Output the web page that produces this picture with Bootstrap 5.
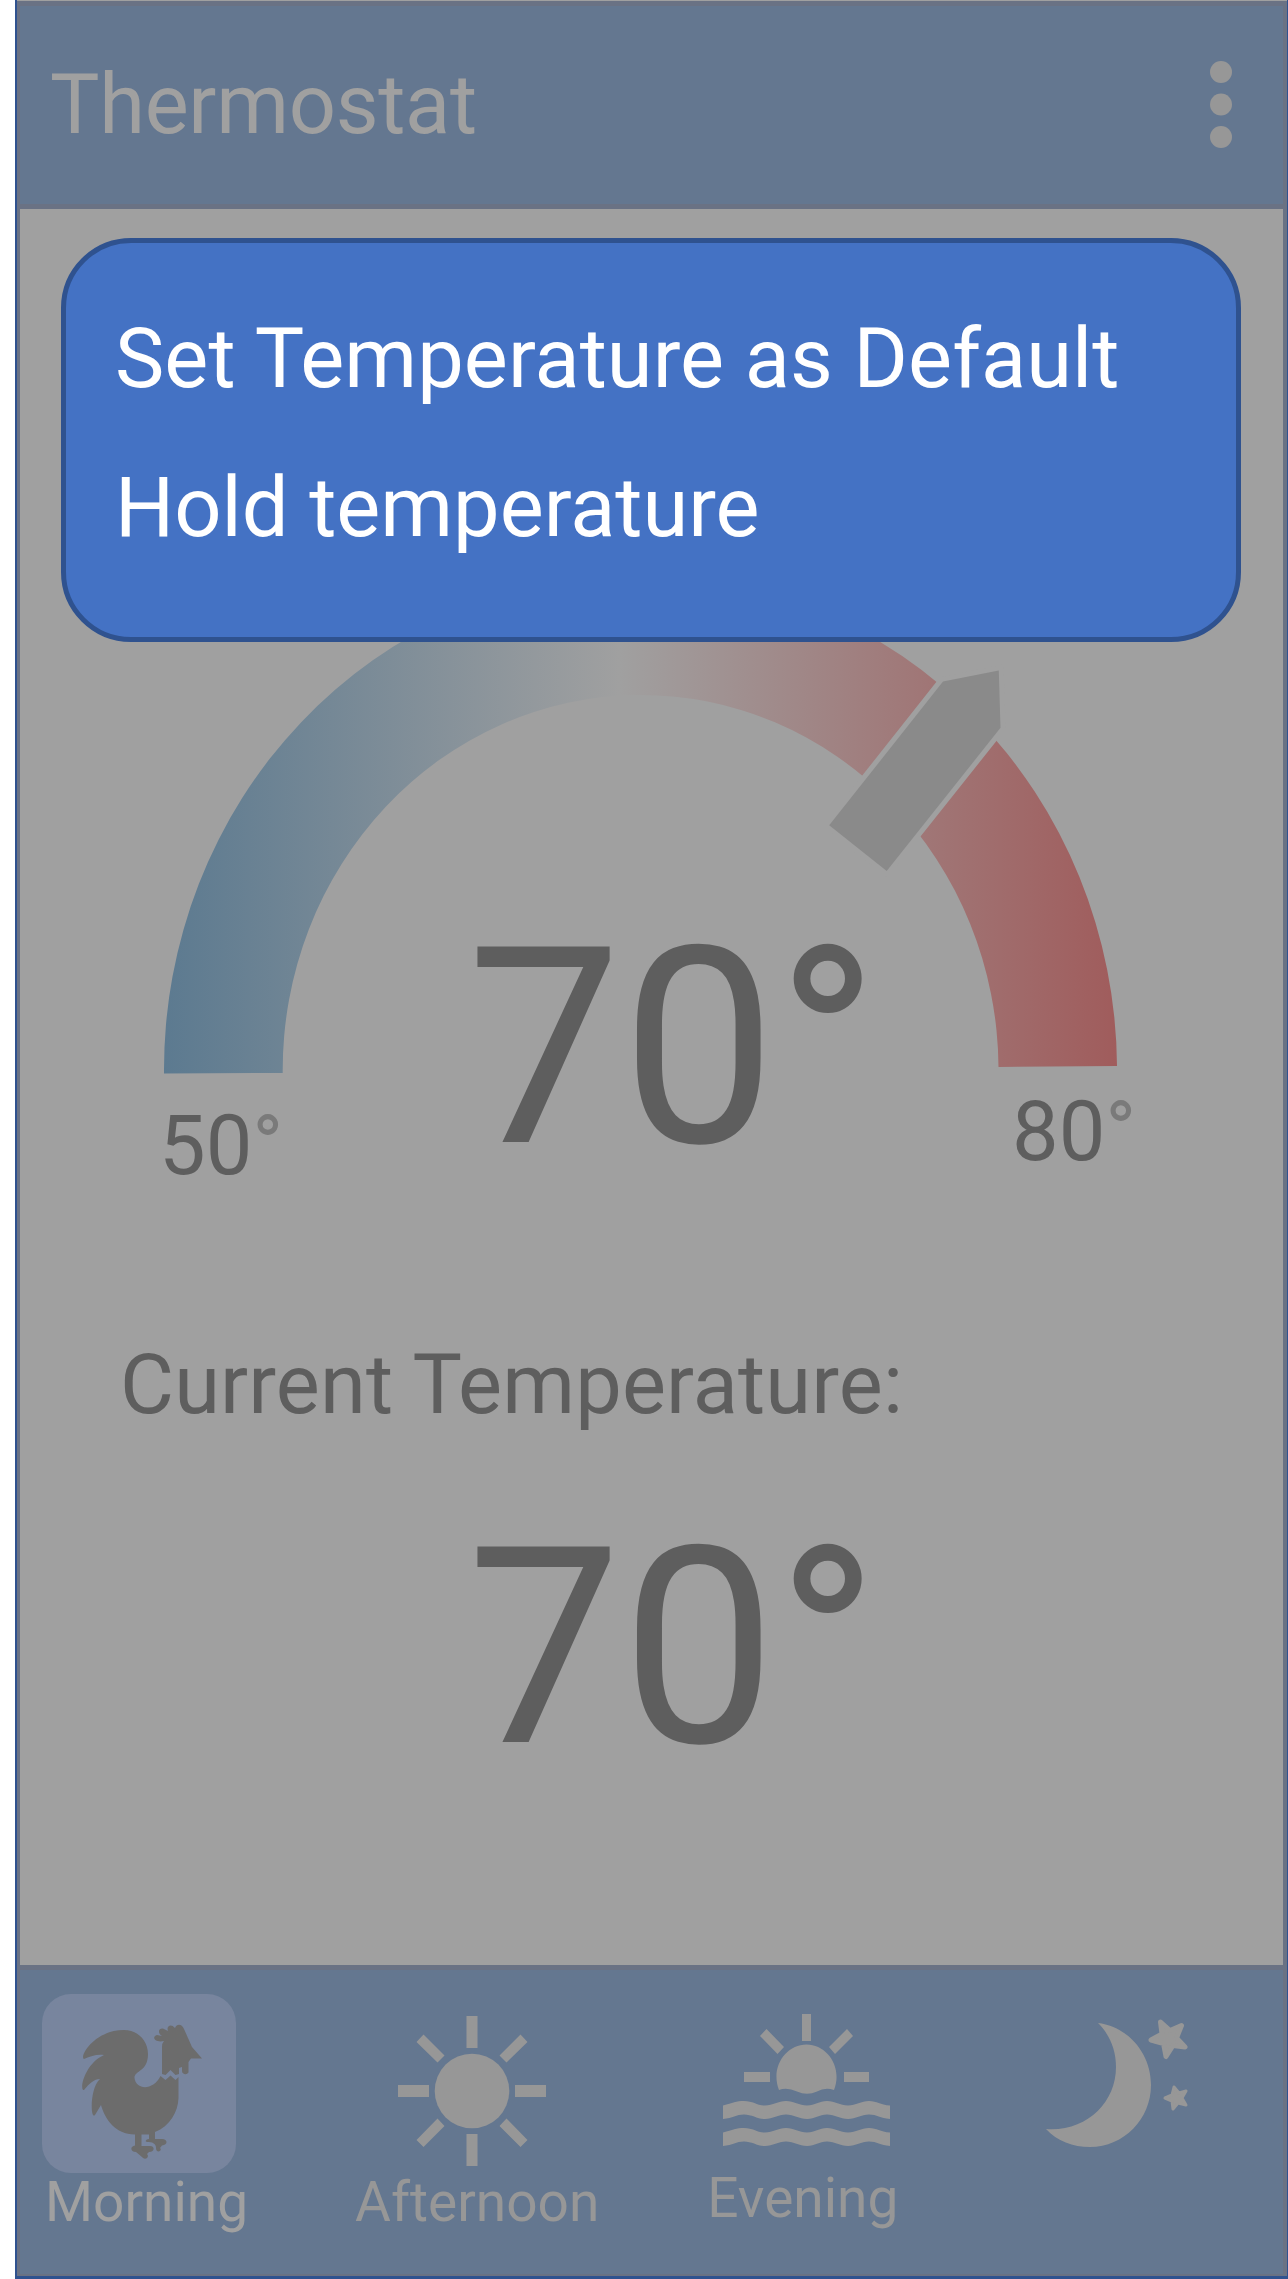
<!DOCTYPE html>
<html lang="en">
<head>
<meta charset="utf-8">
<meta name="viewport" content="width=device-width, initial-scale=1">
<title>Thermostat</title>
<link href="https://cdn.jsdelivr.net/npm/bootstrap@5.3.0/dist/css/bootstrap.min.css" rel="stylesheet">
<style>
  body { background: #fff; font-family: Roboto, "Liberation Sans", sans-serif; font-size: 83px; line-height: 98px; width: 1288px; overflow-x: hidden; }
  .phone { width: 1273px; height: 2279px; margin-left: 15px; background: #a0a0a0; border: solid #2f528f; border-width: 0 1px 3px 2px; padding-top: 1px; }
  .topbar { height: 208px; background: #647790; border: solid #6a7284; border-width: 5px 4px 5px 3px; padding: 0 51px 0 30px; flex-shrink: 0; }
  .topbar h1 { font-size: 83px; line-height: 98px; font-weight: 400; letter-spacing: -.3px; color: #a0a0a0; margin: 0; }
  .stage { border: solid #6a7284; border-width: 0 4px 0 3px; }
  .bottombar { height: 311px; background: #647790; border: solid #6a7284; border-width: 5px 4px 2px 3px; flex-shrink: 0; }
  .option-panel { left: 61px; top: 238px; width: 1180px; height: 404px; background: #4472c4; border: 5px solid #2f528f; border-radius: 70px; padding: 67px 49px 0; }
  .option-panel a { color: #fff; text-decoration: none; height: 149px; white-space: nowrap; flex-shrink: 0; }
  .option-panel a:first-child { letter-spacing: .06px; }
  .ink { color: #5e5e5e; fill: #5e5e5e; }
  .big { font-size: 275px; }
  .deg { fill: #7a7a7a; }
  .current-label { letter-spacing: .15px; margin: 126px 0 0 100px; }
  .current-value { height: 322px; line-height: 322px; font-size: 275px; margin: 53px 0 0 447px; }
  .tab { font-size: 55px; line-height: 64px; color: #979797; text-decoration: none; }
  .tab.on { color: #a0a0a0; }
  .tab svg { display: block; fill: #979797; }
  .tab-morning { margin: 24px 0 0 22px; }
  .tab-morning .caption-text { margin: -3px 0 0 3px; }
  .tab-afternoon { margin: 44px 0 0 107px; }
  .tab-afternoon svg { margin: 2px 0 2px 43px; }
  .tab-evening { margin: 44px 0 0 108px; }
  .tab-evening svg { margin: 0 0 18px 16px; }
  .tab-night { margin: 44px 0 0 146px; }
  .tile { width: 194px; height: 179px; border-radius: 29px; background: #78859e; }
  .tab .tile svg { fill: #6c6c6c; }
</style>
</head>
<body>
<main class="phone d-flex flex-column position-relative">
  <header class="topbar d-flex align-items-center justify-content-between">
    <h1>Thermostat</h1>
    <svg width="22" height="88" viewBox="0 0 22 88" fill="#979797"><circle cx="11" cy="11" r="11"/><circle cx="11" cy="43.500" r="11"/><circle cx="11" cy="76" r="11"/></svg>
  </header>
  <section class="stage flex-grow-1 ink">
    <svg class="d-block" width="1263" height="1001" viewBox="20 209 1263 1001">
      <defs><linearGradient id="heat" gradientUnits="userSpaceOnUse" x1="164" y1="0" x2="1117" y2="0"><stop offset="0" stop-color="#5c7a90"/><stop offset=".478" stop-color="#a0a0a0"/><stop offset="1" stop-color="#a05c5c"/></linearGradient></defs>
      <path fill="url(#heat)" d="M164 1073.500A476.500 495 0 0 1 1117 1066L998.500 1067A357.700 375 0 0 0 282.700 1073Z"/>
      <path fill="#8a8a8a" stroke="#a0a0a0" stroke-width="10" paint-order="stroke" d="M943 681.600L998.800 670.600L1000.500 727.800L886.700 871L829.200 825.300Z"/>
      <text class="big" x="467" y="1142">70°</text>
      <text x="159" y="1174">50<tspan class="deg">°</tspan></text>
      <text x="1012" y="1160">80<tspan class="deg">°</tspan></text>
    </svg>
    <p class="current-label">Current Temperature:</p>
    <p class="current-value">70°</p>
  </section>
  <nav class="bottombar d-flex align-items-start">
    <a href="#" class="tab tab-morning on d-block">
      <span class="tile d-block">
        <svg width="194" height="179" viewBox="42 1994 194 179"><path d="M84 2059C79 2057 94 2030 124 2030C137 2030 148 2040 148 2054C148 2072 134.500 2070 134.500 2078C136 2090 153 2091 160.500 2076L165.500 2080L170.500 2075.500L175.500 2080L178.500 2077V2098C178 2112 170 2126 155 2132V2139H162C168 2139 168 2145 162 2145.500L160 2148C163 2151 156 2154 156 2148C156 2143 152 2142 147 2142C144 2141 147 2139 149 2139V2134.500H141.500V2146H150C155 2146 155 2152 149 2152L147 2154C150 2157 145 2161 142 2157L136 2152C130 2152 130 2146 135 2145.500V2134.500C115 2134.500 105 2119 101 2105L95 2115C90 2120 90 2087 100 2079C94 2079 90 2083 84 2090C79 2091 84 2064 104 2055C97 2054 91 2056 84 2059Z"/><path d="M162 2074V2047Q162 2043 164 2041C155 2043 151 2037 157 2035L162 2036C156 2032 160 2027 164 2029L168 2031C166 2026 171 2023 175 2028C177 2023 182 2024 184 2029L192 2047L202 2058.500H191L188.500 2062V2072C188 2075 182 2075 182 2071V2067L179 2068V2074L175.500 2075L170.500 2070L165.500 2075Z"/></svg>
      </span>
      <span class="caption-text d-block">Morning</span>
    </a>
    <a href="#" class="tab tab-afternoon d-block">
      <svg width="148" height="152" viewBox="0 0 148 152"><circle cx="74" cy="75" r="37.300"/><path d="M68.500 0h11v32h-11zM68.500 118h11v32h-11zM0 69h31v12H0zM117 69h31v12h-31z"/><path d="M18.500 26l7-7.500 21 21-7 7zM101.500 39.500l21-21 7 7.500-21 20.500zM18.500 124l21-21.500 7 7.500-21 21zM101.500 110l7-7.500 21 21.500-7 7z"/></svg>
      <span class="d-block">Afternoon</span>
    </a>
    <a href="#" class="tab tab-evening d-block">
      <svg width="168" height="134" viewBox="722 2014 168 134"><path d="M801 2014h9v27h-9zM743 2072h26v10h-26zM843 2072h25v10h-25zM759 2036l6.500-7 17.500 18-6.500 7zM828 2047l18-18 6 7-18 18zM778 2090C769 2067 785 2044.500 805.500 2044.500S842 2067 833 2090Q824 2087 816 2091.500Q806 2096 796 2091.500Q786 2087 778 2090Z"/><path d="M722 2105.500C732 2103 735 2101 743 2101C752 2101 756 2105.500 764 2105.500S777 2101 785 2101S798 2105.500 806 2105.500S818 2101 826 2101S839 2105.500 847 2105.500S860 2101 868 2101S879 2105 889 2105.500V2119C879 2118 876 2114.500 868 2114.500S855 2119 847 2119S834 2114.500 826 2114.500S814 2119 806 2119S793 2114.500 785 2114.500S772 2119 764 2119S751 2114.500 743 2114.500S732 2118 722 2119Z"/><path d="M722 2132.500C732 2130 735 2128 743 2128C752 2128 756 2132.500 764 2132.500S777 2128 785 2128S798 2132.500 806 2132.500S818 2128 826 2128S839 2132.500 847 2132.500S860 2128 868 2128S879 2132 889 2132.500V2146C879 2145 876 2141.500 868 2141.500S855 2146 847 2146S834 2141.500 826 2141.500S814 2146 806 2146S793 2141.500 785 2141.500S772 2146 764 2146S751 2141.500 743 2141.500S732 2145 722 2146Z"/></svg>
      <span class="d-block">Evening</span>
    </a>
    <a href="#" class="tab tab-night d-block" aria-label="Night">
      <svg width="148" height="140" viewBox="1044 2014 148 140"><path d="M1098 2023C1129 2027 1151 2054 1151 2085C1151 2119 1124 2147 1090 2147C1073 2147 1057 2141 1046 2129C1086 2132 1116 2103 1116 2067C1116 2050 1110 2035 1098 2023Z"/><path stroke="#979797" stroke-width="5" stroke-linejoin="round" d="M1160.500 2022l9.500 8.500 11.500-5-5 12.500 8.500 9-12-1.500-7 11-2.500-13-12.500-3.500 11-6Z"/><path stroke="#979797" stroke-width="3" stroke-linejoin="round" d="M1174 2087l5 6 7-2-4 7 4 7-8-2-5 6-1-8-7-3 7-3Z"/></svg>
    </a>
  </nav>
</main>
<div class="option-panel position-absolute d-flex flex-column">
  <a href="#">Set Temperature as Default</a>
  <a href="#">Hold temperature</a>
</div>
<script src="https://cdn.jsdelivr.net/npm/bootstrap@5.3.0/dist/js/bootstrap.bundle.min.js"></script>
</body>
</html>
